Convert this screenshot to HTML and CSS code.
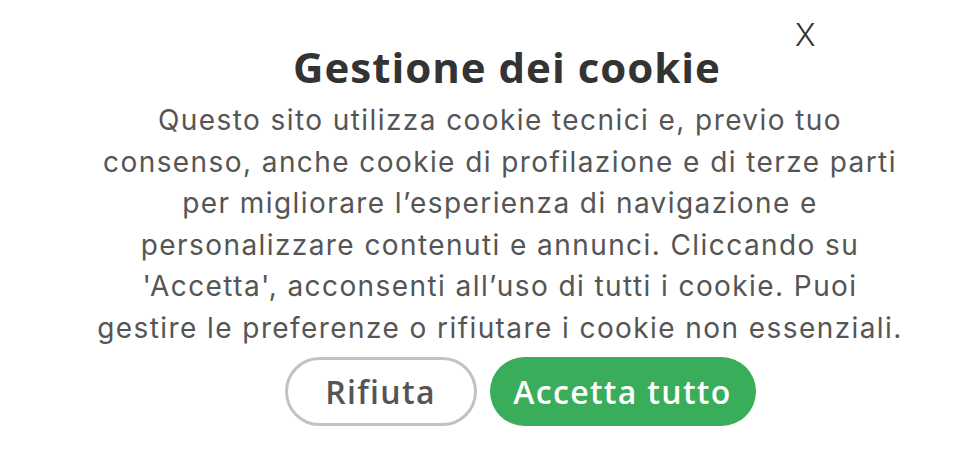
FILE: index.html
```html
<!DOCTYPE html>
<html lang="it">
<head>
    <meta charset="UTF-8">
    <meta name="viewport" content="width=device-width, initial-scale=1.0">
    <title>Gestione dei cookie</title>
    <link rel="stylesheet" href="styles.css">
</head>
<body>
    <div class="cookie-box">
        <button class="close" title="Chiudi">X</button>
        <h1>Gestione dei cookie</h1>
        <p class="text">Questo sito utilizza cookie tecnici e, previo tuo consenso, anche cookie di profilazione e di terze parti per migliorare l’esperienza di navigazione e personalizzare contenuti e annunci. Cliccando su 'Accetta', acconsenti all’uso di tutti i cookie. Puoi gestire le preferenze o rifiutare i cookie non essenziali.</p>
        <div class="actions">
            <button class="btn reject">Rifiuta</button>
            <button class="btn accept">Accetta tutto</button>
        </div>
    </div>
</body>
</html>
```

FILE: styles.css
```css
body {
    margin: 0;
    padding: 0;
    background-color: #fff;
    font-family: Inter, "Noto Sans", sans-serif;
}
.cookie-box {
    position: relative;
    width: 806px;
    margin: 0 0 0 97px;
    padding: 42px 0 0;
    text-align: center;
}
.close {
    position: absolute;
    top: 16px;
    left: 698px;
    background: none;
    border: none;
    font-family: Inter, sans-serif;
    font-weight: 300;
    font-size: 31px;
    color: #333;
    cursor: pointer;
    padding: 0;
}
h1 {
    margin: 0 0 8px;
    padding-left: 14px;
    font-family: "Open Sans", sans-serif;
    font-weight: 700;
    font-size: 42px;
    line-height: 50px;
    letter-spacing: 1px;
    color: #333;
}
.text {
    margin: 0;
    font-size: 28px;
    line-height: 41.6px;
    letter-spacing: 1.42px;
    color: #555;
}
.actions {
    display: flex;
    justify-content: center;
    gap: 13px;
    margin-top: 7px;
    padding-left: 40px;
}
.btn {
    height: 69px;
    border-radius: 35px;
    font-family: "Open Sans", sans-serif;
    font-weight: 600;
    font-size: 32px;
    letter-spacing: 1.3px;
    cursor: pointer;
}
.reject {
    width: 192px;
    background: #fff;
    border: 3px solid #c2c2c2;
    color: #555;
}
.accept {
    width: 266px;
    background: #3aad5a;
    border: none;
    color: #fff;
}
```
